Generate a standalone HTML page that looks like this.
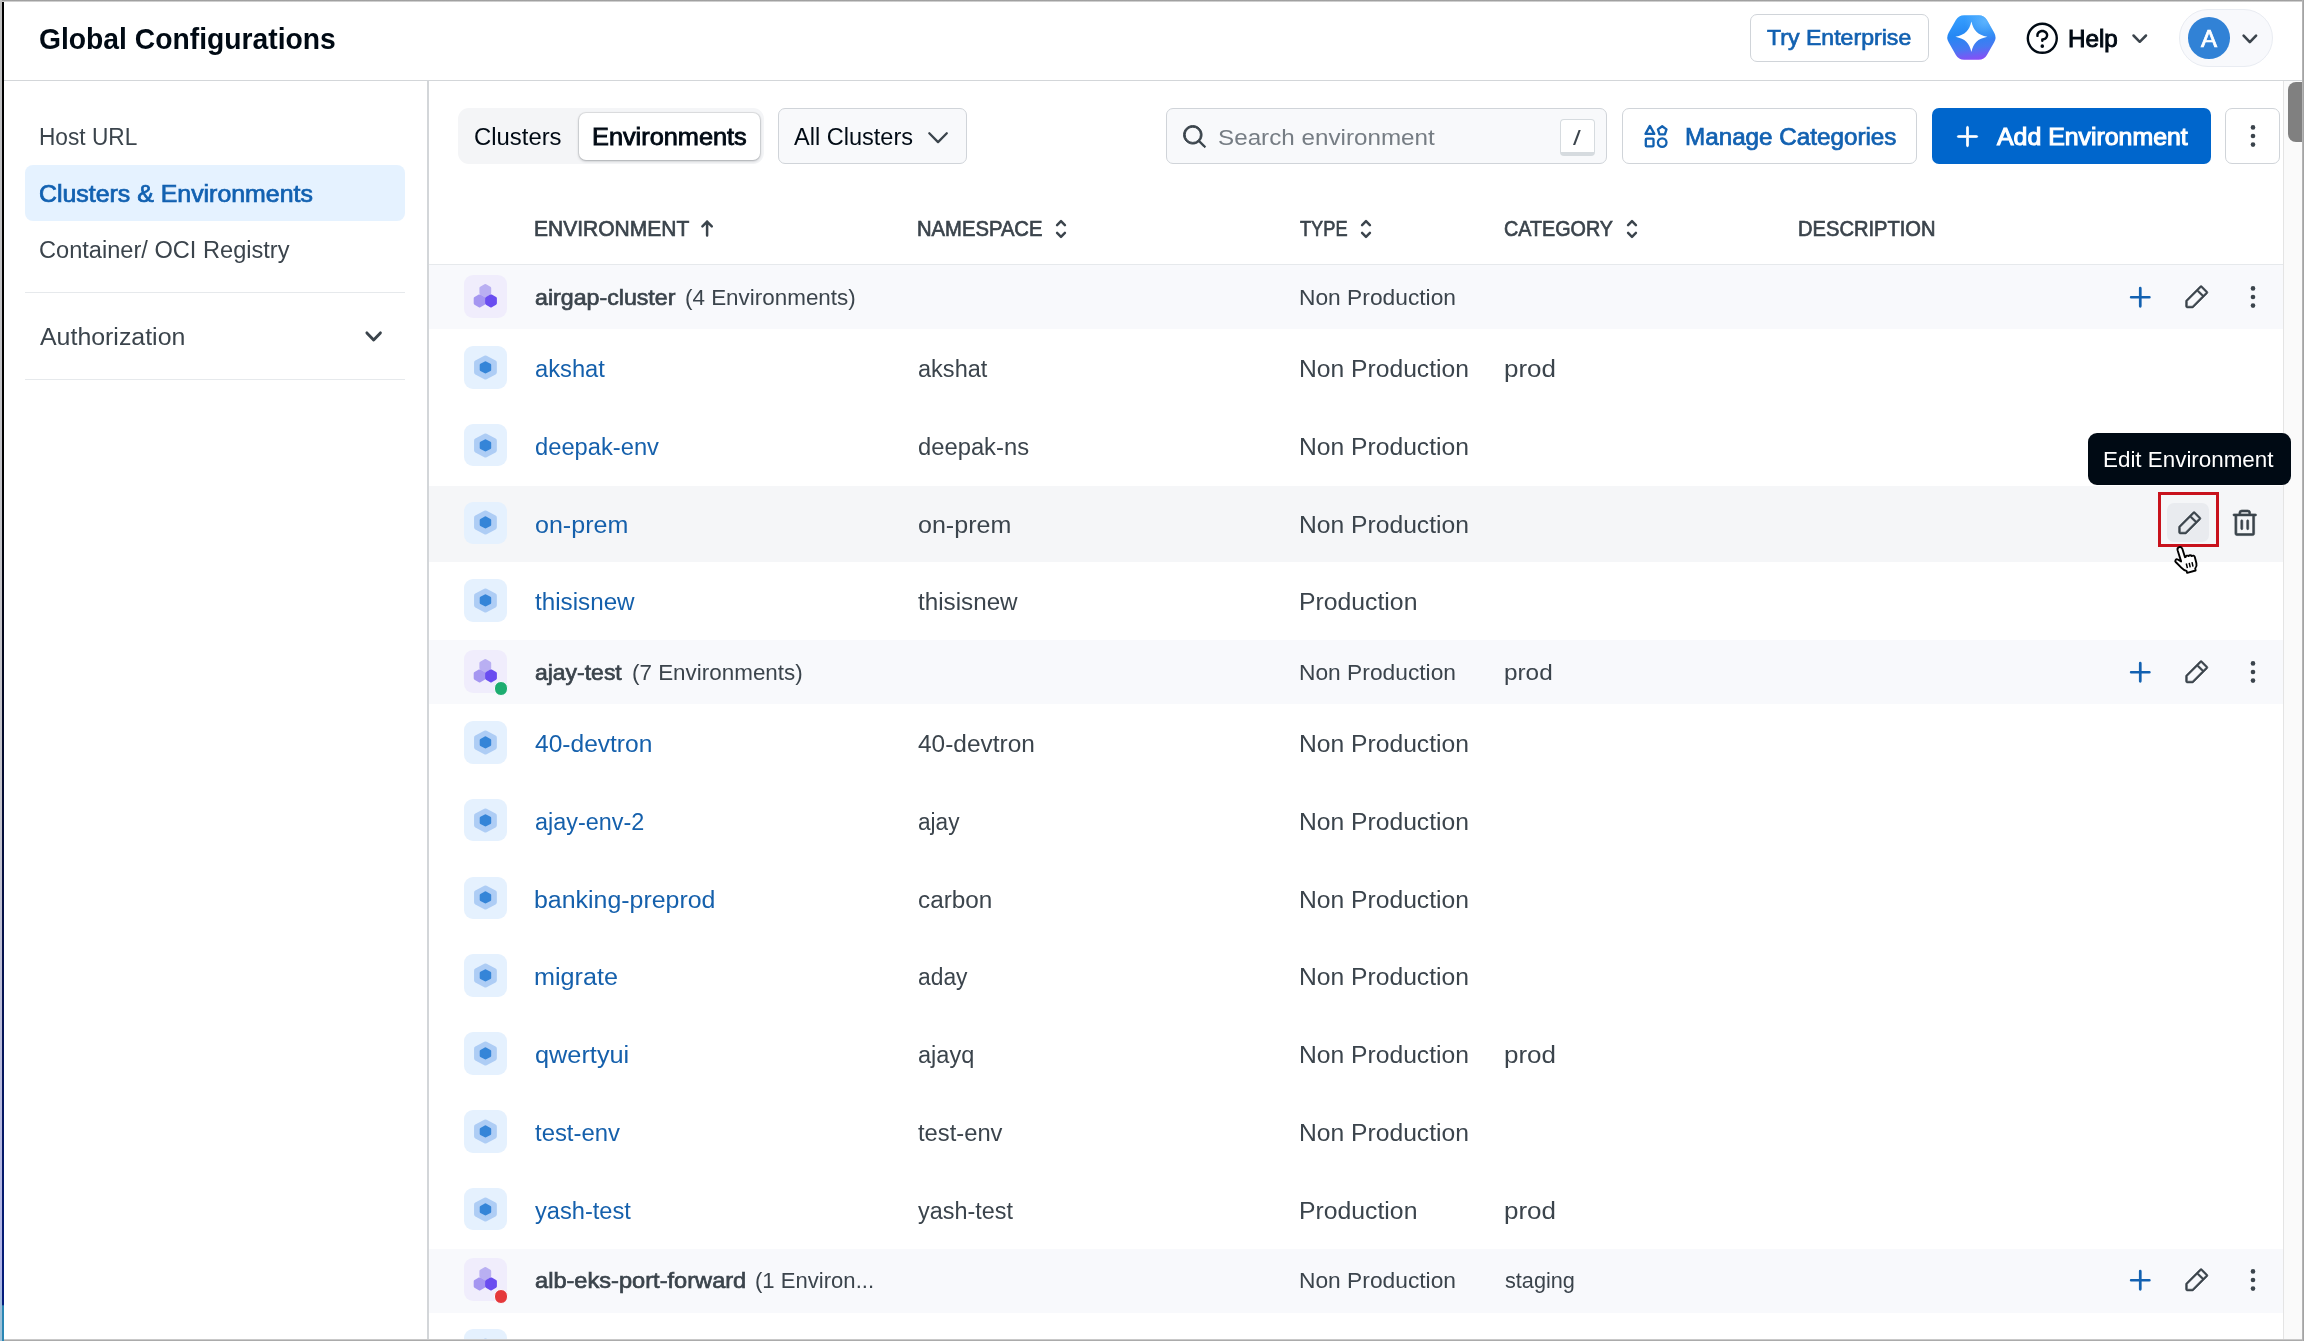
<!DOCTYPE html>
<html lang="en"><head><meta charset="utf-8"><title>Global Configurations</title>
<style>
html,body{margin:0;padding:0;background:#fff}
body{width:2304px;height:1341px;overflow:hidden;font-family:"Liberation Sans", sans-serif}
#app{position:relative;width:2304px;height:1341px;overflow:hidden;will-change:transform;background:transparent}
#app>div,#app>span,#app>svg{position:absolute;display:block}
.t{white-space:nowrap;transform-origin:0 50%}
</style></head><body><div id="app">
<div style="left:0px;top:0px;width:2304px;height:1341px;background:#fff"></div>
<span id="t0" class="t" style="left:39.04px;top:23.90px;font-size:29.3px;line-height:29.3px;font-weight:700;color:#000a14;transform:scaleX(0.9647);">Global Configurations</span>
<div style="left:4px;top:79.5px;width:2300px;height:1.4000000000000057px;background:#d3d6d9"></div>
<div style="left:1750px;top:14px;width:178.5px;height:48px;border:1.5px solid #d0d4d9;border-radius:7px;box-sizing:border-box;background:#fff"></div>
<span id="t1" class="t" style="left:1767.36px;top:27.58px;font-size:21.4px;line-height:21.4px;font-weight:400;color:#1261b1;transform:scaleX(1.0804);-webkit-text-stroke:0.66px #1261b1;">Try Enterprise</span>
<svg style="left:1944px;top:12px" width="56" height="52" viewBox="1944 12 56 52"><defs><linearGradient id="aig" x1="0.5" y1="0" x2="0.64" y2="1"><stop offset="0" stop-color="#369fff"/><stop offset="0.42" stop-color="#2587f3"/><stop offset="0.72" stop-color="#457af2"/><stop offset="1" stop-color="#8a4cf6"/></linearGradient><radialGradient id="aih" cx="0.78" cy="0.14" r="0.42"><stop offset="0" stop-color="#6fc0ff" stop-opacity="0.7"/><stop offset="1" stop-color="#6fc0ff" stop-opacity="0"/></radialGradient></defs><path d="M1955.87,19.98 Q1958.60,15.20 1964.10,15.20 L1978.70,15.20 Q1984.20,15.20 1986.93,19.98 L1994.17,32.67 Q1996.90,37.45 1994.17,42.23 L1986.93,54.92 Q1984.20,59.70 1978.70,59.70 L1964.10,59.70 Q1958.60,59.70 1955.87,54.92 L1948.63,42.23 Q1945.90,37.45 1948.63,32.67Z" fill="url(#aig)"/><path d="M1955.87,19.98 Q1958.60,15.20 1964.10,15.20 L1978.70,15.20 Q1984.20,15.20 1986.93,19.98 L1994.17,32.67 Q1996.90,37.45 1994.17,42.23 L1986.93,54.92 Q1984.20,59.70 1978.70,59.70 L1964.10,59.70 Q1958.60,59.70 1955.87,54.92 L1948.63,42.23 Q1945.90,37.45 1948.63,32.67Z" fill="url(#aih)"/><path d="M1971.4,21.5 C1973.6,30.8 1977.4,34.6 1987.4,36.8 C1977.4,39 1973.6,42.8 1971.4,52.1 C1969.2,42.8 1965.4,39 1955.4,36.8 C1965.4,34.6 1969.2,30.8 1971.4,21.5Z" fill="#fff"/></svg>
<svg style="left:2023.10px;top:18.50px;" width="38.6" height="38.6" viewBox="0 0 256 256"><path d="M140,180a12,12,0,1,1-12-12A12,12,0,0,1,140,180ZM128,72c-22.06,0-40,16.15-40,36v4a8,8,0,0,0,16,0v-4c0-11,10.77-20,24-20s24,9,24,20-10.77,20-24,20a8,8,0,0,0-8,8v8a8,8,0,0,0,16,0v-.72c18.24-3.35,32-17.9,32-35.28C168,88.15,150.06,72,128,72Zm104,56A104,104,0,1,1,128,24,104.11,104.11,0,0,1,232,128Zm-16,0a88,88,0,1,0-88,88A88.1,88.1,0,0,0,216,128Z" fill="#000a14"/></svg>
<span id="t2" class="t" style="left:2068.13px;top:27.73px;font-size:23px;line-height:23px;font-weight:400;color:#000a14;transform:scaleX(1.0510);-webkit-text-stroke:0.92px #000a14;">Help</span>
<svg style="left:2130.95px;top:33.35px" width="17.5" height="11.3" viewBox="-2.5 -2.5 17.5 11.3"><polyline points="0,0 6.25,6.3 12.5,0" fill="none" stroke="#3b444c" stroke-width="2.5" stroke-linecap="round" stroke-linejoin="round"/></svg>
<div style="left:2179px;top:8.6px;width:94px;height:58.6px;border:1.5px solid #e9ecf2;border-radius:30px;box-sizing:border-box;background:#f8f9fc"></div>
<div style="left:2187.5px;top:16.9px;width:42.5px;height:42.2px;background:#3182d6;border-radius:50%"></div>
<span id="t3" class="t" style="left:2200.97px;top:27.28px;font-size:24px;line-height:24px;font-weight:400;color:#fff;transform:scaleX(1.0036);-webkit-text-stroke:0.74px #fff;">A</span>
<svg style="left:2241.45px;top:33.15px" width="17.7" height="11.7" viewBox="-2.6 -2.6 17.7 11.7"><polyline points="0,0 6.25,6.5 12.5,0" fill="none" stroke="#3b444c" stroke-width="2.6" stroke-linecap="round" stroke-linejoin="round"/></svg>
<div style="left:427.4px;top:80.9px;width:1.5px;height:1260.1px;background:#d3d6d9"></div>
<span id="t4" class="t" style="left:39.01px;top:125.73px;font-size:23px;line-height:23px;font-weight:400;color:#3b444c;transform:scaleX(0.9858);">Host URL</span>
<div style="left:25px;top:165px;width:380px;height:55.5px;background:#e5f2ff;border-radius:8px"></div>
<span id="t5" class="t" style="left:39.30px;top:182.73px;font-size:23px;line-height:23px;font-weight:400;color:#1261b1;transform:scaleX(1.0820);-webkit-text-stroke:0.71px #1261b1;">Clusters &amp; Environments</span>
<span id="t6" class="t" style="left:38.97px;top:238.73px;font-size:23px;line-height:23px;font-weight:400;color:#3b444c;transform:scaleX(1.0261);">Container/ OCI Registry</span>
<div style="left:25px;top:292px;width:380px;height:1.3000000000000114px;background:#e6e9ec"></div>
<span id="t7" class="t" style="left:40.00px;top:325.73px;font-size:23px;line-height:23px;font-weight:400;color:#3b444c;transform:scaleX(1.0827);">Authorization</span>
<svg style="left:364.35px;top:330.10px" width="19.3" height="12.8" viewBox="-2.9 -2.9 19.3 12.8"><polyline points="0,0 6.75,7 13.5,0" fill="none" stroke="#3b444c" stroke-width="2.9" stroke-linecap="round" stroke-linejoin="round"/></svg>
<div style="left:25px;top:378.6px;width:380px;height:1.3999999999999773px;background:#e6e9ec"></div>
<div style="left:457.5px;top:108px;width:306.0px;height:55.5px;background:#f4f5f7;border-radius:11px"></div>
<span id="t8" class="t" style="left:473.96px;top:125.73px;font-size:23px;line-height:23px;font-weight:400;color:#000a14;transform:scaleX(1.0380);">Clusters</span>
<div style="left:579px;top:113px;width:181px;height:47px;background:#fff;border-radius:7px;box-shadow:0 1px 3px rgba(0,10,20,.28),0 0 0 1px rgba(0,10,20,.07)"></div>
<span id="t9" class="t" style="left:592.36px;top:125.73px;font-size:23px;line-height:23px;font-weight:400;color:#000a14;transform:scaleX(1.1004);-webkit-text-stroke:0.83px #000a14;">Environments</span>
<div style="left:778px;top:108px;width:189px;height:55.5px;border:1.5px solid #d0d4d9;border-radius:7px;box-sizing:border-box;background:#f8f9fb"></div>
<span id="t10" class="t" style="left:794.00px;top:125.73px;font-size:23px;line-height:23px;font-weight:400;color:#000a14;transform:scaleX(1.0233);">All Clusters</span>
<svg style="left:926.95px;top:130.80px" width="22.1" height="13.4" viewBox="-2.3 -2.3 22.1 13.4"><polyline points="0,0 8.75,8.8 17.5,0" fill="none" stroke="#3b444c" stroke-width="2.3" stroke-linecap="round" stroke-linejoin="round"/></svg>
<div style="left:1165.5px;top:108px;width:441.0px;height:56px;border:1.5px solid #d0d4d9;border-radius:7px;box-sizing:border-box;background:#f8f9fb"></div>
<svg style="left:1180.90px;top:123.30px;" width="27" height="27" viewBox="0 0 256 256"><path d="M229.66,218.34l-50.07-50.06a88.11,88.11,0,1,0-11.31,11.31l50.06,50.07a8,8,0,0,0,11.32-11.32ZM40,112a72,72,0,1,1,72,72A72.08,72.08,0,0,1,40,112Z" fill="#3b444c" stroke="#3b444c" stroke-width="9"/></svg>
<span id="t11" class="t" style="left:1218.43px;top:126.91px;font-size:22.6px;line-height:22.6px;font-weight:400;color:#767d84;transform:scaleX(1.0722);">Search environment</span>
<div style="left:1560px;top:118.5px;width:35px;height:37.5px;border:1.5px solid #d6dbdf;border-bottom:4px solid #d6dbdf;border-radius:4px;box-sizing:border-box;background:#fff"></div>
<span id="t12" class="t" style="left:1573.00px;top:126.62px;font-size:21px;line-height:21px;font-weight:400;color:#3b444c;transform:scaleX(1.3333);">/</span>
<div style="left:1621.5px;top:108px;width:295.5px;height:55.5px;border:1.5px solid #d0d4d9;border-radius:7px;box-sizing:border-box;background:#fff"></div>
<svg style="left:1642px;top:122px" width="28" height="28" viewBox="1642 122 28 28" fill="none" stroke="#1261b1" stroke-width="2.3" stroke-linejoin="round"><path d="M1649.9,125.9 L1654.3,133.9 L1645.5,133.9 Z"/><polygon points="1662.20,126.20 1666.48,129.31 1664.85,134.34 1659.55,134.34 1657.92,129.31"/><rect x="1645.8" y="138.7" width="7.7" height="7.7" rx="1"/><circle cx="1662.2" cy="142.6" r="4.3"/></svg>
<span id="t13" class="t" style="left:1684.72px;top:125.73px;font-size:23px;line-height:23px;font-weight:400;color:#1261b1;transform:scaleX(1.0533);-webkit-text-stroke:0.71px #1261b1;">Manage Categories</span>
<div style="left:1932px;top:108px;width:278.5px;height:55.5px;background:#0066cc;border-radius:7px"></div>
<svg style="left:1954.00px;top:122.50px;" width="27" height="27" viewBox="0 0 256 256"><path d="M224,128a8,8,0,0,1-8,8H136v80a8,8,0,0,1-16,0V136H40a8,8,0,0,1,0-16h80V40a8,8,0,0,1,16,0v80h80A8,8,0,0,1,224,128Z" fill="#fff" stroke="#fff" stroke-width="9"/></svg>
<span id="t14" class="t" style="left:1996.56px;top:125.73px;font-size:23px;line-height:23px;font-weight:400;color:#fff;transform:scaleX(1.0810);-webkit-text-stroke:1.03px #fff;">Add Environment</span>
<div style="left:2225px;top:108px;width:55px;height:55.5px;border:1.5px solid #d0d4d9;border-radius:7px;box-sizing:border-box;background:#fff"></div>
<svg style="left:2248.5px;top:122px" width="8" height="28" viewBox="-4 -14 8 28"><circle cx="0" cy="-8.6" r="2.3" fill="#3b444c"/><circle cx="0" cy="0" r="2.3" fill="#3b444c"/><circle cx="0" cy="8.6" r="2.3" fill="#3b444c"/></svg>
<span id="t15" class="t" style="left:534.34px;top:218.05px;font-size:21.2px;line-height:21.2px;font-weight:400;color:#3b444c;transform:scaleX(0.9918);-webkit-text-stroke:0.66px #3b444c;">ENVIRONMENT</span>
<svg style="left:697px;top:216px" width="20" height="26" viewBox="697 216 20 26" fill="none" stroke="#3b444c" stroke-width="2.5" stroke-linecap="round" stroke-linejoin="round"><path d="M707.1,221.6 V235.4 M702.4,226.3 L707.1,221.6 L711.8,226.3"/></svg>
<span id="t16" class="t" style="left:916.86px;top:218.05px;font-size:21.2px;line-height:21.2px;font-weight:400;color:#3b444c;transform:scaleX(0.9542);-webkit-text-stroke:0.66px #3b444c;">NAMESPACE</span>
<svg style="left:1053px;top:215px" width="16" height="28" viewBox="-8 -14 16 28"><polyline points="-3.9,-3.9 0,-7.8 3.9,-3.9" fill="none" stroke="#3b444c" stroke-width="2.5" stroke-linecap="round" stroke-linejoin="round"/><polyline points="-3.9,3.9 0,7.8 3.9,3.9" fill="none" stroke="#3b444c" stroke-width="2.5" stroke-linecap="round" stroke-linejoin="round"/></svg>
<span id="t17" class="t" style="left:1300.28px;top:218.05px;font-size:21.2px;line-height:21.2px;font-weight:400;color:#3b444c;transform:scaleX(0.8592);-webkit-text-stroke:0.66px #3b444c;">TYPE</span>
<svg style="left:1358px;top:215px" width="16" height="28" viewBox="-8 -14 16 28"><polyline points="-3.9,-3.9 0,-7.8 3.9,-3.9" fill="none" stroke="#3b444c" stroke-width="2.5" stroke-linecap="round" stroke-linejoin="round"/><polyline points="-3.9,3.9 0,7.8 3.9,3.9" fill="none" stroke="#3b444c" stroke-width="2.5" stroke-linecap="round" stroke-linejoin="round"/></svg>
<span id="t18" class="t" style="left:1504.38px;top:218.05px;font-size:21.2px;line-height:21.2px;font-weight:400;color:#3b444c;transform:scaleX(0.9316);-webkit-text-stroke:0.66px #3b444c;">CATEGORY</span>
<svg style="left:1623.5px;top:215px" width="16" height="28" viewBox="-8 -14 16 28"><polyline points="-3.9,-3.9 0,-7.8 3.9,-3.9" fill="none" stroke="#3b444c" stroke-width="2.5" stroke-linecap="round" stroke-linejoin="round"/><polyline points="-3.9,3.9 0,7.8 3.9,3.9" fill="none" stroke="#3b444c" stroke-width="2.5" stroke-linecap="round" stroke-linejoin="round"/></svg>
<span id="t19" class="t" style="left:1798.36px;top:218.05px;font-size:21.2px;line-height:21.2px;font-weight:400;color:#3b444c;transform:scaleX(0.9500);-webkit-text-stroke:0.66px #3b444c;">DESCRIPTION</span>
<div style="left:429px;top:263.5px;width:1854px;height:1.3999999999999773px;background:#e6e9ec"></div>
<div style="left:429px;top:485.5px;width:1854px;height:76.0px;background:#f5f6f8"></div>
<div style="left:429px;top:264.8px;width:1854px;height:64.0px;background:#f8f9fc"></div>
<div style="left:464.1px;top:275.15px;width:42.69999999999999px;height:42.700000000000045px;background:#f0edfc;border-radius:9px"></div>
<svg style="left:464px;top:275.00px" width="43" height="43" viewBox="464 275.00 43 43"><polygon points="485.30,285.70 489.60,288.15 489.60,293.05 485.30,295.50 481.00,293.05 481.00,288.15" fill="#b9aff2" stroke="#b9aff2" stroke-width="3.2" stroke-linejoin="round"/><polygon points="479.60,296.00 483.90,298.45 483.90,303.35 479.60,305.80 475.30,303.35 475.30,298.45" fill="#a596f1" stroke="#a596f1" stroke-width="3.2" stroke-linejoin="round"/><polygon points="491.00,296.00 495.30,298.45 495.30,303.35 491.00,305.80 486.70,303.35 486.70,298.45" fill="#6a4df0" stroke="#6a4df0" stroke-width="3.2" stroke-linejoin="round"/></svg>
<span id="t20" class="t" style="left:535.36px;top:288.19px;font-size:21.4px;line-height:21.4px;font-weight:400;color:#3b444c;transform:scaleX(1.0836);-webkit-text-stroke:0.66px #3b444c;">airgap-cluster</span>
<span id="t21" class="t" style="left:685.45px;top:288.19px;font-size:21.4px;line-height:21.4px;font-weight:400;color:#3b444c;transform:scaleX(1.0483);">(4 Environments)</span>
<span id="t22" class="t" style="left:1298.94px;top:288.19px;font-size:21.4px;line-height:21.4px;font-weight:400;color:#3b444c;transform:scaleX(1.0649);">Non Production</span>
<svg style="left:2127.05px;top:283.55px;" width="26.5" height="26.5" viewBox="0 0 256 256"><path d="M224,128a8,8,0,0,1-8,8H136v80a8,8,0,0,1-16,0V136H40a8,8,0,0,1,0-16h80V40a8,8,0,0,1,16,0v80h80A8,8,0,0,1,224,128Z" fill="#1261b1" stroke="#1261b1" stroke-width="10"/></svg>
<svg style="left:2182.35px;top:282.55px;" width="28.5" height="28.5" viewBox="0 0 256 256"><path d="M227.31,73.37,182.63,28.68a16,16,0,0,0-22.63,0L36.69,152A15.86,15.86,0,0,0,32,163.31V208a16,16,0,0,0,16,16H92.69A15.86,15.86,0,0,0,104,219.31L227.31,96a16,16,0,0,0,0-22.63ZM92.69,208H48V163.31l88-88L180.69,120ZM192,108.68,147.31,64l24-24L216,84.68Z" fill="#3b444c" stroke="#3b444c" stroke-width="5"/></svg>
<svg style="left:2248.5px;top:282.8px" width="8" height="28" viewBox="-4 -14 8 28"><circle cx="0" cy="-8.6" r="2.3" fill="#3b444c"/><circle cx="0" cy="0" r="2.3" fill="#3b444c"/><circle cx="0" cy="8.6" r="2.3" fill="#3b444c"/></svg>
<div style="left:464.1px;top:345.9px;width:42.69999999999999px;height:42.700000000000045px;background:#e5f1fe;border-radius:9px"></div>
<svg style="left:464px;top:345.75px" width="43" height="43" viewBox="464 345.75 43 43"><polygon points="485.45,357.55 494.45,362.40 494.45,372.10 485.45,376.95 476.45,372.10 476.45,362.40" fill="#aecdf5" stroke="#aecdf5" stroke-width="4.8" stroke-linejoin="round"/><polygon points="485.45,362.40 489.90,364.77 489.90,369.52 485.45,371.90 481.00,369.52 481.00,364.77" fill="#3585d8" stroke="#3585d8" stroke-width="2.6" stroke-linejoin="round"/></svg>
<span id="t23" class="t" style="left:535.00px;top:357.83px;font-size:23px;line-height:23px;font-weight:400;color:#1560ac;transform:scaleX(1.0311);">akshat</span>
<span id="t24" class="t" style="left:917.50px;top:357.83px;font-size:23px;line-height:23px;font-weight:400;color:#3b444c;transform:scaleX(1.0238);">akshat</span>
<span id="t25" class="t" style="left:1298.93px;top:357.83px;font-size:23px;line-height:23px;font-weight:400;color:#3b444c;transform:scaleX(1.0718);">Non Production</span>
<span id="t26" class="t" style="left:1503.87px;top:357.83px;font-size:23px;line-height:23px;font-weight:400;color:#3b444c;transform:scaleX(1.1301);">prod</span>
<div style="left:464.1px;top:423.7px;width:42.69999999999999px;height:42.700000000000045px;background:#e5f1fe;border-radius:9px"></div>
<svg style="left:464px;top:423.55px" width="43" height="43" viewBox="464 423.55 43 43"><polygon points="485.45,435.35 494.45,440.20 494.45,449.90 485.45,454.75 476.45,449.90 476.45,440.20" fill="#aecdf5" stroke="#aecdf5" stroke-width="4.8" stroke-linejoin="round"/><polygon points="485.45,440.20 489.90,442.57 489.90,447.32 485.45,449.70 481.00,447.32 481.00,442.57" fill="#3585d8" stroke="#3585d8" stroke-width="2.6" stroke-linejoin="round"/></svg>
<span id="t27" class="t" style="left:535.00px;top:435.63px;font-size:23px;line-height:23px;font-weight:400;color:#1560ac;transform:scaleX(1.0315);">deepak-env</span>
<span id="t28" class="t" style="left:917.50px;top:435.63px;font-size:23px;line-height:23px;font-weight:400;color:#3b444c;transform:scaleX(1.0336);">deepak-ns</span>
<span id="t29" class="t" style="left:1298.93px;top:435.63px;font-size:23px;line-height:23px;font-weight:400;color:#3b444c;transform:scaleX(1.0718);">Non Production</span>
<div style="left:464.1px;top:501.6px;width:42.69999999999999px;height:42.700000000000045px;background:#e5f1fe;border-radius:9px"></div>
<svg style="left:464px;top:501.45px" width="43" height="43" viewBox="464 501.45 43 43"><polygon points="485.45,513.25 494.45,518.10 494.45,527.80 485.45,532.65 476.45,527.80 476.45,518.10" fill="#aecdf5" stroke="#aecdf5" stroke-width="4.8" stroke-linejoin="round"/><polygon points="485.45,518.10 489.90,520.48 489.90,525.23 485.45,527.60 481.00,525.23 481.00,520.48" fill="#3585d8" stroke="#3585d8" stroke-width="2.6" stroke-linejoin="round"/></svg>
<span id="t30" class="t" style="left:535.00px;top:513.53px;font-size:23px;line-height:23px;font-weight:400;color:#1560ac;transform:scaleX(1.0890);">on-prem</span>
<span id="t31" class="t" style="left:917.50px;top:513.53px;font-size:23px;line-height:23px;font-weight:400;color:#3b444c;transform:scaleX(1.0890);">on-prem</span>
<span id="t32" class="t" style="left:1298.93px;top:513.53px;font-size:23px;line-height:23px;font-weight:400;color:#3b444c;transform:scaleX(1.0718);">Non Production</span>
<div style="left:464.1px;top:579.4px;width:42.69999999999999px;height:42.700000000000045px;background:#e5f1fe;border-radius:9px"></div>
<svg style="left:464px;top:579.25px" width="43" height="43" viewBox="464 579.25 43 43"><polygon points="485.45,591.05 494.45,595.90 494.45,605.60 485.45,610.45 476.45,605.60 476.45,595.90" fill="#aecdf5" stroke="#aecdf5" stroke-width="4.8" stroke-linejoin="round"/><polygon points="485.45,595.90 489.90,598.27 489.90,603.02 485.45,605.40 481.00,603.02 481.00,598.27" fill="#3585d8" stroke="#3585d8" stroke-width="2.6" stroke-linejoin="round"/></svg>
<span id="t33" class="t" style="left:535.00px;top:591.33px;font-size:23px;line-height:23px;font-weight:400;color:#1560ac;transform:scaleX(1.0528);">thisisnew</span>
<span id="t34" class="t" style="left:917.50px;top:591.33px;font-size:23px;line-height:23px;font-weight:400;color:#3b444c;transform:scaleX(1.0528);">thisisnew</span>
<span id="t35" class="t" style="left:1298.92px;top:591.33px;font-size:23px;line-height:23px;font-weight:400;color:#3b444c;transform:scaleX(1.0770);">Production</span>
<div style="left:429px;top:640.2px;width:1854px;height:63.59999999999991px;background:#f8f9fc"></div>
<div style="left:464.1px;top:650.35px;width:42.69999999999999px;height:42.700000000000045px;background:#f0edfc;border-radius:9px"></div>
<svg style="left:464px;top:650.20px" width="43" height="43" viewBox="464 650.20 43 43"><polygon points="485.30,660.90 489.60,663.35 489.60,668.25 485.30,670.70 481.00,668.25 481.00,663.35" fill="#b9aff2" stroke="#b9aff2" stroke-width="3.2" stroke-linejoin="round"/><polygon points="479.60,671.20 483.90,673.65 483.90,678.55 479.60,681.00 475.30,678.55 475.30,673.65" fill="#a596f1" stroke="#a596f1" stroke-width="3.2" stroke-linejoin="round"/><polygon points="491.00,671.20 495.30,673.65 495.30,678.55 491.00,681.00 486.70,678.55 486.70,673.65" fill="#6a4df0" stroke="#6a4df0" stroke-width="3.2" stroke-linejoin="round"/></svg>
<div style="left:494.2px;top:681.4px;width:14.200000000000045px;height:14.200000000000045px;background:#1dad70;border-radius:50%;border:1.5px solid #fbfbff;box-sizing:border-box"></div>
<span id="t36" class="t" style="left:535.35px;top:663.39px;font-size:21.4px;line-height:21.4px;font-weight:400;color:#3b444c;transform:scaleX(1.0728);-webkit-text-stroke:0.66px #3b444c;">ajay-test</span>
<span id="t37" class="t" style="left:631.95px;top:663.39px;font-size:21.4px;line-height:21.4px;font-weight:400;color:#3b444c;transform:scaleX(1.0483);">(7 Environments)</span>
<span id="t38" class="t" style="left:1298.94px;top:663.39px;font-size:21.4px;line-height:21.4px;font-weight:400;color:#3b444c;transform:scaleX(1.0649);">Non Production</span>
<span id="t39" class="t" style="left:1503.86px;top:663.39px;font-size:21.4px;line-height:21.4px;font-weight:400;color:#3b444c;transform:scaleX(1.1365);">prod</span>
<svg style="left:2127.05px;top:658.75px;" width="26.5" height="26.5" viewBox="0 0 256 256"><path d="M224,128a8,8,0,0,1-8,8H136v80a8,8,0,0,1-16,0V136H40a8,8,0,0,1,0-16h80V40a8,8,0,0,1,16,0v80h80A8,8,0,0,1,224,128Z" fill="#1261b1" stroke="#1261b1" stroke-width="10"/></svg>
<svg style="left:2182.35px;top:657.75px;" width="28.5" height="28.5" viewBox="0 0 256 256"><path d="M227.31,73.37,182.63,28.68a16,16,0,0,0-22.63,0L36.69,152A15.86,15.86,0,0,0,32,163.31V208a16,16,0,0,0,16,16H92.69A15.86,15.86,0,0,0,104,219.31L227.31,96a16,16,0,0,0,0-22.63ZM92.69,208H48V163.31l88-88L180.69,120ZM192,108.68,147.31,64l24-24L216,84.68Z" fill="#3b444c" stroke="#3b444c" stroke-width="5"/></svg>
<svg style="left:2248.5px;top:658.0px" width="8" height="28" viewBox="-4 -14 8 28"><circle cx="0" cy="-8.6" r="2.3" fill="#3b444c"/><circle cx="0" cy="0" r="2.3" fill="#3b444c"/><circle cx="0" cy="8.6" r="2.3" fill="#3b444c"/></svg>
<div style="left:464.1px;top:721.1px;width:42.69999999999999px;height:42.700000000000045px;background:#e5f1fe;border-radius:9px"></div>
<svg style="left:464px;top:720.95px" width="43" height="43" viewBox="464 720.95 43 43"><polygon points="485.45,732.75 494.45,737.60 494.45,747.30 485.45,752.15 476.45,747.30 476.45,737.60" fill="#aecdf5" stroke="#aecdf5" stroke-width="4.8" stroke-linejoin="round"/><polygon points="485.45,737.60 489.90,739.98 489.90,744.73 485.45,747.10 481.00,744.73 481.00,739.98" fill="#3585d8" stroke="#3585d8" stroke-width="2.6" stroke-linejoin="round"/></svg>
<span id="t40" class="t" style="left:535.00px;top:733.03px;font-size:23px;line-height:23px;font-weight:400;color:#1560ac;transform:scaleX(1.0672);">40-devtron</span>
<span id="t41" class="t" style="left:917.50px;top:733.03px;font-size:23px;line-height:23px;font-weight:400;color:#3b444c;transform:scaleX(1.0626);">40-devtron</span>
<span id="t42" class="t" style="left:1298.93px;top:733.03px;font-size:23px;line-height:23px;font-weight:400;color:#3b444c;transform:scaleX(1.0718);">Non Production</span>
<div style="left:464.1px;top:798.8px;width:42.69999999999999px;height:42.700000000000045px;background:#e5f1fe;border-radius:9px"></div>
<svg style="left:464px;top:798.65px" width="43" height="43" viewBox="464 798.65 43 43"><polygon points="485.45,810.45 494.45,815.30 494.45,825.00 485.45,829.85 476.45,825.00 476.45,815.30" fill="#aecdf5" stroke="#aecdf5" stroke-width="4.8" stroke-linejoin="round"/><polygon points="485.45,815.30 489.90,817.67 489.90,822.42 485.45,824.80 481.00,822.42 481.00,817.67" fill="#3585d8" stroke="#3585d8" stroke-width="2.6" stroke-linejoin="round"/></svg>
<span id="t43" class="t" style="left:535.00px;top:810.73px;font-size:23px;line-height:23px;font-weight:400;color:#1560ac;transform:scaleX(1.0179);">ajay-env-2</span>
<span id="t44" class="t" style="left:917.50px;top:810.73px;font-size:23px;line-height:23px;font-weight:400;color:#3b444c;transform:scaleX(0.9838);">ajay</span>
<span id="t45" class="t" style="left:1298.93px;top:810.73px;font-size:23px;line-height:23px;font-weight:400;color:#3b444c;transform:scaleX(1.0718);">Non Production</span>
<div style="left:464.1px;top:876.6px;width:42.69999999999999px;height:42.700000000000045px;background:#e5f1fe;border-radius:9px"></div>
<svg style="left:464px;top:876.45px" width="43" height="43" viewBox="464 876.45 43 43"><polygon points="485.45,888.25 494.45,893.10 494.45,902.80 485.45,907.65 476.45,902.80 476.45,893.10" fill="#aecdf5" stroke="#aecdf5" stroke-width="4.8" stroke-linejoin="round"/><polygon points="485.45,893.10 489.90,895.48 489.90,900.23 485.45,902.60 481.00,900.23 481.00,895.48" fill="#3585d8" stroke="#3585d8" stroke-width="2.6" stroke-linejoin="round"/></svg>
<span id="t46" class="t" style="left:533.92px;top:888.53px;font-size:23px;line-height:23px;font-weight:400;color:#1560ac;transform:scaleX(1.0832);">banking-preprod</span>
<span id="t47" class="t" style="left:917.50px;top:888.53px;font-size:23px;line-height:23px;font-weight:400;color:#3b444c;transform:scaleX(1.0570);">carbon</span>
<span id="t48" class="t" style="left:1298.93px;top:888.53px;font-size:23px;line-height:23px;font-weight:400;color:#3b444c;transform:scaleX(1.0718);">Non Production</span>
<div style="left:464.1px;top:954.4px;width:42.69999999999999px;height:42.700000000000045px;background:#e5f1fe;border-radius:9px"></div>
<svg style="left:464px;top:954.25px" width="43" height="43" viewBox="464 954.25 43 43"><polygon points="485.45,966.05 494.45,970.90 494.45,980.60 485.45,985.45 476.45,980.60 476.45,970.90" fill="#aecdf5" stroke="#aecdf5" stroke-width="4.8" stroke-linejoin="round"/><polygon points="485.45,970.90 489.90,973.27 489.90,978.02 485.45,980.40 481.00,978.02 481.00,973.27" fill="#3585d8" stroke="#3585d8" stroke-width="2.6" stroke-linejoin="round"/></svg>
<span id="t49" class="t" style="left:533.91px;top:966.33px;font-size:23px;line-height:23px;font-weight:400;color:#1560ac;transform:scaleX(1.0948);">migrate</span>
<span id="t50" class="t" style="left:917.50px;top:966.33px;font-size:23px;line-height:23px;font-weight:400;color:#3b444c;transform:scaleX(0.9926);">aday</span>
<span id="t51" class="t" style="left:1298.93px;top:966.33px;font-size:23px;line-height:23px;font-weight:400;color:#3b444c;transform:scaleX(1.0718);">Non Production</span>
<div style="left:464.1px;top:1032.2px;width:42.69999999999999px;height:42.69999999999982px;background:#e5f1fe;border-radius:9px"></div>
<svg style="left:464px;top:1032.05px" width="43" height="43" viewBox="464 1032.05 43 43"><polygon points="485.45,1043.85 494.45,1048.70 494.45,1058.40 485.45,1063.25 476.45,1058.40 476.45,1048.70" fill="#aecdf5" stroke="#aecdf5" stroke-width="4.8" stroke-linejoin="round"/><polygon points="485.45,1048.70 489.90,1051.08 489.90,1055.83 485.45,1058.20 481.00,1055.83 481.00,1051.08" fill="#3585d8" stroke="#3585d8" stroke-width="2.6" stroke-linejoin="round"/></svg>
<span id="t52" class="t" style="left:535.00px;top:1044.13px;font-size:23px;line-height:23px;font-weight:400;color:#1560ac;transform:scaleX(1.1002);">qwertyui</span>
<span id="t53" class="t" style="left:917.50px;top:1044.13px;font-size:23px;line-height:23px;font-weight:400;color:#3b444c;transform:scaleX(1.0241);">ajayq</span>
<span id="t54" class="t" style="left:1298.93px;top:1044.13px;font-size:23px;line-height:23px;font-weight:400;color:#3b444c;transform:scaleX(1.0718);">Non Production</span>
<span id="t55" class="t" style="left:1503.87px;top:1044.13px;font-size:23px;line-height:23px;font-weight:400;color:#3b444c;transform:scaleX(1.1301);">prod</span>
<div style="left:464.1px;top:1110.0px;width:42.69999999999999px;height:42.69999999999982px;background:#e5f1fe;border-radius:9px"></div>
<svg style="left:464px;top:1109.85px" width="43" height="43" viewBox="464 1109.85 43 43"><polygon points="485.45,1121.65 494.45,1126.50 494.45,1136.20 485.45,1141.05 476.45,1136.20 476.45,1126.50" fill="#aecdf5" stroke="#aecdf5" stroke-width="4.8" stroke-linejoin="round"/><polygon points="485.45,1126.50 489.90,1128.88 489.90,1133.62 485.45,1136.00 481.00,1133.62 481.00,1128.88" fill="#3585d8" stroke="#3585d8" stroke-width="2.6" stroke-linejoin="round"/></svg>
<span id="t56" class="t" style="left:535.00px;top:1121.93px;font-size:23px;line-height:23px;font-weight:400;color:#1560ac;transform:scaleX(1.0387);">test-env</span>
<span id="t57" class="t" style="left:917.50px;top:1121.93px;font-size:23px;line-height:23px;font-weight:400;color:#3b444c;transform:scaleX(1.0326);">test-env</span>
<span id="t58" class="t" style="left:1298.93px;top:1121.93px;font-size:23px;line-height:23px;font-weight:400;color:#3b444c;transform:scaleX(1.0718);">Non Production</span>
<div style="left:464.1px;top:1187.7px;width:42.69999999999999px;height:42.69999999999982px;background:#e5f1fe;border-radius:9px"></div>
<svg style="left:464px;top:1187.55px" width="43" height="43" viewBox="464 1187.55 43 43"><polygon points="485.45,1199.35 494.45,1204.20 494.45,1213.90 485.45,1218.75 476.45,1213.90 476.45,1204.20" fill="#aecdf5" stroke="#aecdf5" stroke-width="4.8" stroke-linejoin="round"/><polygon points="485.45,1204.20 489.90,1206.58 489.90,1211.33 485.45,1213.70 481.00,1211.33 481.00,1206.58" fill="#3585d8" stroke="#3585d8" stroke-width="2.6" stroke-linejoin="round"/></svg>
<span id="t59" class="t" style="left:535.00px;top:1199.63px;font-size:23px;line-height:23px;font-weight:400;color:#1560ac;transform:scaleX(1.0274);">yash-test</span>
<span id="t60" class="t" style="left:917.50px;top:1199.63px;font-size:23px;line-height:23px;font-weight:400;color:#3b444c;transform:scaleX(1.0168);">yash-test</span>
<span id="t61" class="t" style="left:1298.92px;top:1199.63px;font-size:23px;line-height:23px;font-weight:400;color:#3b444c;transform:scaleX(1.0770);">Production</span>
<span id="t62" class="t" style="left:1503.87px;top:1199.63px;font-size:23px;line-height:23px;font-weight:400;color:#3b444c;transform:scaleX(1.1301);">prod</span>
<div style="left:429px;top:1249.1px;width:1854px;height:63.5px;background:#f8f9fc"></div>
<div style="left:464.1px;top:1258.3500000000001px;width:42.69999999999999px;height:42.69999999999982px;background:#f0edfc;border-radius:9px"></div>
<svg style="left:464px;top:1258.20px" width="43" height="43" viewBox="464 1258.20 43 43"><polygon points="485.30,1268.90 489.60,1271.35 489.60,1276.25 485.30,1278.70 481.00,1276.25 481.00,1271.35" fill="#b9aff2" stroke="#b9aff2" stroke-width="3.2" stroke-linejoin="round"/><polygon points="479.60,1279.20 483.90,1281.65 483.90,1286.55 479.60,1289.00 475.30,1286.55 475.30,1281.65" fill="#a596f1" stroke="#a596f1" stroke-width="3.2" stroke-linejoin="round"/><polygon points="491.00,1279.20 495.30,1281.65 495.30,1286.55 491.00,1289.00 486.70,1286.55 486.70,1281.65" fill="#6a4df0" stroke="#6a4df0" stroke-width="3.2" stroke-linejoin="round"/></svg>
<div style="left:494.2px;top:1289.4px;width:14.200000000000045px;height:14.199999999999818px;background:#e5383b;border-radius:50%;border:1.5px solid #fbfbff;box-sizing:border-box"></div>
<span id="t63" class="t" style="left:535.36px;top:1271.39px;font-size:21.4px;line-height:21.4px;font-weight:400;color:#3b444c;transform:scaleX(1.1038);-webkit-text-stroke:0.66px #3b444c;">alb-eks-port-forward</span>
<span id="t64" class="t" style="left:755.47px;top:1271.39px;font-size:21.4px;line-height:21.4px;font-weight:400;color:#3b444c;transform:scaleX(1.0322);">(1 Environ...</span>
<span id="t65" class="t" style="left:1298.94px;top:1271.39px;font-size:21.4px;line-height:21.4px;font-weight:400;color:#3b444c;transform:scaleX(1.0649);">Non Production</span>
<span id="t66" class="t" style="left:1505.00px;top:1271.39px;font-size:21.4px;line-height:21.4px;font-weight:400;color:#3b444c;transform:scaleX(1.0135);">staging</span>
<svg style="left:2127.05px;top:1266.75px;" width="26.5" height="26.5" viewBox="0 0 256 256"><path d="M224,128a8,8,0,0,1-8,8H136v80a8,8,0,0,1-16,0V136H40a8,8,0,0,1,0-16h80V40a8,8,0,0,1,16,0v80h80A8,8,0,0,1,224,128Z" fill="#1261b1" stroke="#1261b1" stroke-width="10"/></svg>
<svg style="left:2182.35px;top:1265.75px;" width="28.5" height="28.5" viewBox="0 0 256 256"><path d="M227.31,73.37,182.63,28.68a16,16,0,0,0-22.63,0L36.69,152A15.86,15.86,0,0,0,32,163.31V208a16,16,0,0,0,16,16H92.69A15.86,15.86,0,0,0,104,219.31L227.31,96a16,16,0,0,0,0-22.63ZM92.69,208H48V163.31l88-88L180.69,120ZM192,108.68,147.31,64l24-24L216,84.68Z" fill="#3b444c" stroke="#3b444c" stroke-width="5"/></svg>
<svg style="left:2248.5px;top:1266.0px" width="8" height="28" viewBox="-4 -14 8 28"><circle cx="0" cy="-8.6" r="2.3" fill="#3b444c"/><circle cx="0" cy="0" r="2.3" fill="#3b444c"/><circle cx="0" cy="8.6" r="2.3" fill="#3b444c"/></svg>
<div style="left:464.1px;top:1329.0px;width:42.69999999999999px;height:42.69999999999982px;background:#e5f1fe;border-radius:9px"></div>
<svg style="left:464px;top:1328.85px" width="43" height="43" viewBox="464 1328.85 43 43"><polygon points="485.45,1340.65 494.45,1345.50 494.45,1355.20 485.45,1360.05 476.45,1355.20 476.45,1345.50" fill="#aecdf5" stroke="#aecdf5" stroke-width="4.8" stroke-linejoin="round"/><polygon points="485.45,1345.50 489.90,1347.88 489.90,1352.62 485.45,1355.00 481.00,1352.62 481.00,1347.88" fill="#3585d8" stroke="#3585d8" stroke-width="2.6" stroke-linejoin="round"/></svg>
<div style="left:2167.2px;top:502.9px;width:42.100000000000364px;height:39.10000000000002px;background:#e9ebef;border-radius:7px"></div>
<svg style="left:2174.55px;top:508.55px;" width="28.5" height="28.5" viewBox="0 0 256 256"><path d="M227.31,73.37,182.63,28.68a16,16,0,0,0-22.63,0L36.69,152A15.86,15.86,0,0,0,32,163.31V208a16,16,0,0,0,16,16H92.69A15.86,15.86,0,0,0,104,219.31L227.31,96a16,16,0,0,0,0-22.63ZM92.69,208H48V163.31l88-88L180.69,120ZM192,108.68,147.31,64l24-24L216,84.68Z" fill="#3b444c" stroke="#3b444c" stroke-width="5"/></svg>
<svg style="left:2229.15px;top:508.25px;" width="31.5" height="31.5" viewBox="0 0 256 256"><path d="M216,48H176V40a24,24,0,0,0-24-24H104A24,24,0,0,0,80,40v8H40a8,8,0,0,0,0,16h8V208a16,16,0,0,0,16,16H192a16,16,0,0,0,16-16V64h8a8,8,0,0,0,0-16ZM96,40a8,8,0,0,1,8-8h48a8,8,0,0,1,8,8v8H96Zm96,168H64V64H192ZM112,104v64a8,8,0,0,1-16,0V104a8,8,0,0,1,16,0Zm48,0v64a8,8,0,0,1-16,0V104a8,8,0,0,1,16,0Z" fill="#3b444c" stroke="#3b444c" stroke-width="5"/></svg>
<div style="left:2157.6px;top:492px;width:61.09999999999991px;height:54.5px;border:3px solid #c8121c;box-sizing:border-box"></div>
<svg style="left:2170px;top:543px" width="32" height="32" viewBox="0 0 32 32"><path d="M9.2,4.2c1.5-0.5,2.7,0.4,3.2,1.8l2.6,8.2l0.6-0.2c0.2-1.3,1.9-1.9,3-0.9c0.7-1.1,2.4-1.2,3.2,0c1-0.9,2.6-0.5,3,0.9l1.6,6.2c0.5,2,0,3.9-1.2,5.3l0.4,2l-8.4,2.3l-0.7-1.9c-2.2-0.4-3.6-1.6-5.2-3.3l-5.6-5.6c-1.2-1.3,0.3-3.3,2-2.5l3.4,1.9L7.6,7.3C7.2,5.9,7.8,4.7,9.2,4.200Z" fill="#fff" stroke="#000" stroke-width="1.9" stroke-linejoin="round"/><path d="M16.3,20.5l1.1,4.6M19.2,19.9l1,4.5M22,19.2l1,4.4" stroke="#000" stroke-width="1.5" fill="none"/></svg>
<div style="left:2283px;top:80.9px;width:21px;height:1260.1px;background:#fafafa;border-left:1.4px solid #e4e4e4;box-sizing:border-box"></div>
<div style="left:2287.8px;top:82.4px;width:22.199999999999818px;height:59.599999999999994px;background:#808080;border-radius:8px"></div>
<div style="left:2087.5px;top:433px;width:203.0px;height:51.5px;background:#000a14;border-radius:9px"></div>
<span id="t67" class="t" style="left:2102.95px;top:449.74px;font-size:21.4px;line-height:21.4px;font-weight:400;color:#fff;transform:scaleX(1.0467);">Edit Environment</span>
<div style="left:0px;top:0px;width:2304px;height:2.2px;background:linear-gradient(#9a9a9a,#a8a8a8 55%,#fff)"></div>
<div style="left:0px;top:1339.3px;width:2304px;height:1.7000000000000455px;background:linear-gradient(#d8d8d8,#9c9c9c)"></div>
<div style="left:2302.3px;top:0px;width:1.699999999999818px;height:1341px;background:linear-gradient(90deg,#bdbdbd,#9a9a9a)"></div>
<div style="left:0px;top:0px;width:1.7px;height:1341px;background:linear-gradient(#c0c0c0 0,#c4c4cc 60%,#b0b4e8 95%,#9cc0d8 98%)"></div>
<div style="left:1.7px;top:2px;width:2.5px;height:1339px;background:linear-gradient(#000 0,#000 35%,#04104a 70%,#031c7d 97.27%,#2a86b4 97.38%,#2a86b4 100%)"></div>
</div></body></html>
